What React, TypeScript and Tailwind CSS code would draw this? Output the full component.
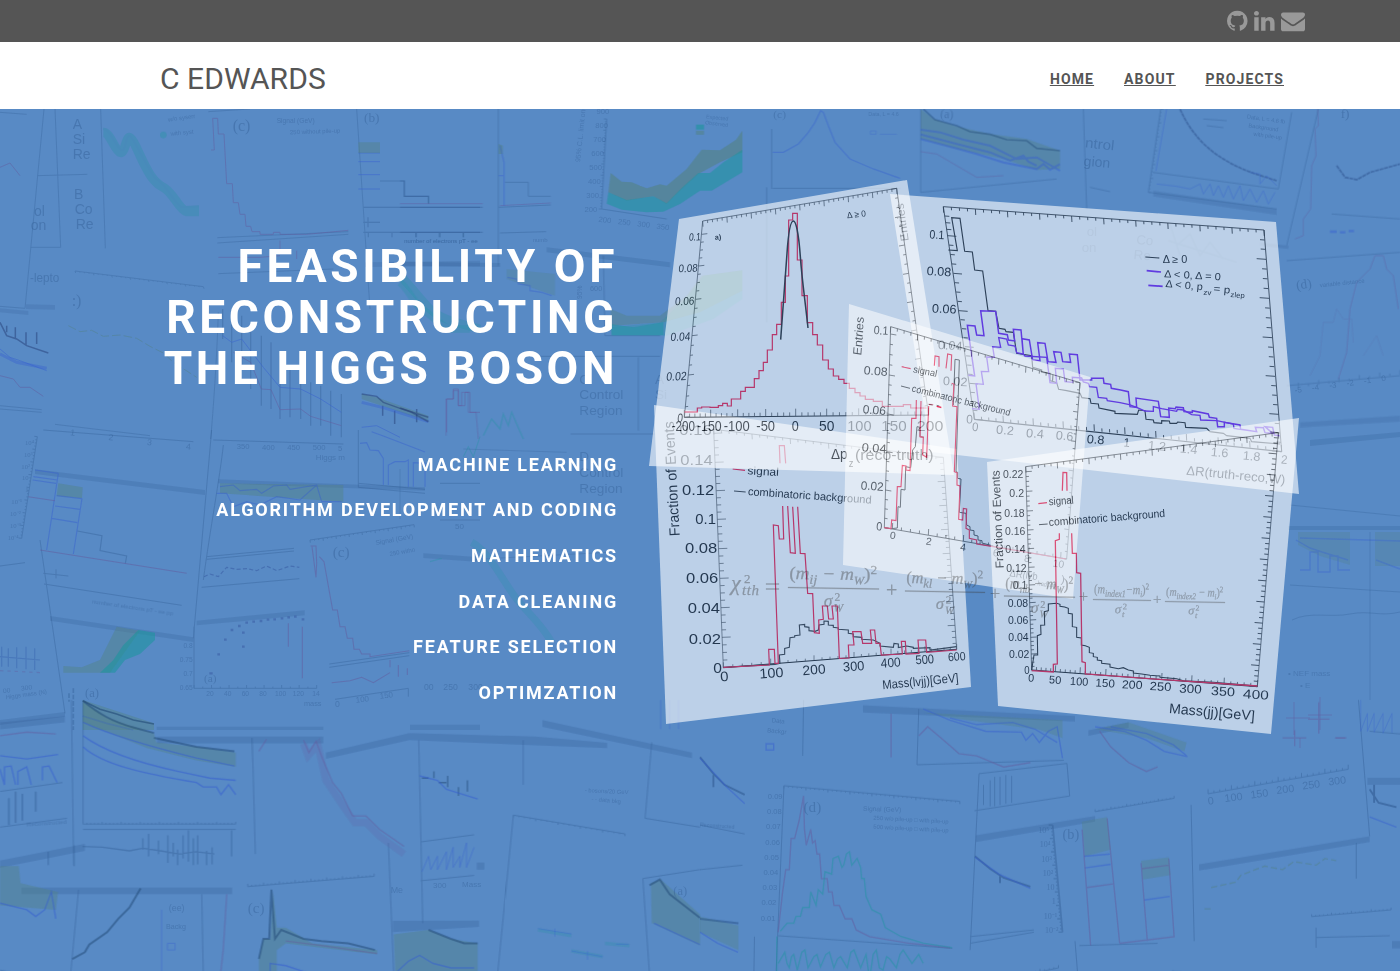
import React from "react";

type Pt = [number, number];

/* Places a group whose inner units are finer than a page pixel. */
function Zone({ x, y, k = 3, children }: { x: number; y: number; k?: number; children: React.ReactNode }) {
  return <g transform={`translate(${x} ${y}) scale(${1 / k})`}>{children}</g>;
}

/* Tick marks through a list of major points, with minor ones in between. */
function ticks(majors: Pt[], minor: number, dx: number, dy: number) {
  let d = "";
  majors.forEach(([x, y], i) => {
    d += `M${x} ${y}l${dx} ${dy}`;
    const next = majors[i + 1];
    if (!next) return;
    for (let j = 1; j < minor; j++) {
      const t = j / minor;
      d += `M${x + (next[0] - x) * t} ${y + (next[1] - y) * t}l${dx / 2} ${dy / 2}`;
    }
  });
  return d;
}

function even(a: Pt, b: Pt, n: number): Pt[] {
  return Array.from({ length: n + 1 }, (_, i) => [a[0] + ((b[0] - a[0]) * i) / n, a[1] + ((b[1] - a[1]) * i) / n] as Pt);
}

/* A histogram outline from the left edge and height of every bin. */
function steps(pts: Pt[]) {
  return pts.map(([x, y], i) => (i === 0 ? `M${x} ${y}` : `H${x}V${y}`)).join("");
}

type LabelProps = {
  x: number;
  y: number;
  s: number;
  w?: number;
  r?: number;
  k?: number;
  a?: "start" | "middle" | "end";
  fill?: string;
  serif?: boolean;
  children: string;
};

function Label({ x, y, s, w, r = 0, k = 0, a = "start", fill = "#000", serif = false, children }: LabelProps) {
  return (
    <text
      transform={`translate(${x} ${y}) rotate(${r}) skewX(${k})`}
      fontSize={s}
      textAnchor={a}
      fill={fill}
      textLength={w}
      lengthAdjust="spacingAndGlyphs"
      className={serif ? "font-['Liberation_Serif',serif]" : "font-['Liberation_Sans',sans-serif]"}
    >
      {children}
    </text>
  );
}

const RED = "#f5002f";
const PURPLE = "#6608f2";

function SheetMassLvjj() {
  const left: Pt[] = [[221, 100], [225, 187], [229, 272], [232, 358], [236, 446], [240, 535], [243, 623], [246, 712], [250, 803]];
  const bottom: Pt[] = [[250, 803], [392, 792], [522, 782], [642, 772], [753, 762], [855, 755], [950, 748]];
  const names = ["0.16", "0.14", "0.12", "0.1", "0.08", "0.06", "0.04", "0.02", "0"];
  const xs = [215, 218, 223, 228, 232, 235, 240, 243, 246];
  const ys = [106, 194, 284, 372, 460, 550, 640, 732, 818];
  return (
    <g opacity={0.6}>
      <polygon points="654,405 957,449 971,687 666,724" fill="#fff" />
      <Zone x={640} y={400}>
        <g fill="none" stroke="#333" strokeWidth={2}>
          <path d="M221 88L250 803M221 88L910 172L950 748" />
          <path d="M250 803L950 748" stroke="#000" strokeWidth={3} />
          <path d={ticks(left, 4, 26, -1)} />
          <path d={ticks(bottom, 5, 0, -16)} />
          <path d={ticks(even([221, 88], [910, 172], 6), 5, 1, 16)} />
          <path d={ticks(even([910, 172], [950, 748], 8), 4, -22, 1)} />
        </g>
        <path
          d="M250 802L405 793L420 790L418 765L434 763V745L448 742L450 713L464 711V707L480 705L478 675L494 673V680L507 682V692L525 694L535 690L537 675L552 673V663L565 664V675L580 676V682L595 684V688L625 690V700L640 702V710L665 712V718L700 720L720 730V738L760 742L762 730L775 732V743L800 738L820 742V745L870 743V750L905 746L950 740"
          fill="none"
          stroke="#222"
          strokeWidth={3.4}
        />
        <path
          d="M250 802L388 795L386 748L403 748L405 790L415 790L400 375L415 377L418 417L431 417L428 318M443 318L451 458L466 460L458 320M473 320L481 460L495 461L503 580L518 581L523 698L538 700L536 660L550 658L547 618L562 618L566 657L580 657L576 618L592 618L598 775L627 774L625 735L642 735L638 695L663 695L668 730L695 730L691 690L704 690L708 730L720 730L724 765L787 762L784 724L796 724L798 762L837 760L834 720L857 720L860 757L950 750M420 190L418 137L433 137L437 190M278 207L315 211"
          fill="none"
          stroke={RED}
          strokeWidth={3.6}
        />
        <path d="M282 273L317 276" stroke="#222" strokeWidth={3} />
        {names.map((n, i) => (
          <Label key={n} x={xs[i]} y={ys[i]} s={45} a="end" w={n === "0" ? 26 : n === "0.1" ? 62 : 97}>
            {n}
          </Label>
        ))}
        {["0", "100", "200", "300", "400", "500", "600"].map((n, i) => (
          <Label key={n} x={[254, 395, 523, 642, 753, 855, 951][i]} y={[844, 833, 823, 812, 801, 791, 782][i]} s={[42, 42, 41, 40, 39, 38, 36][i]} r={-4} a="middle" w={i === 0 ? 25 : [0, 72, 69, 64, 60, 56, 53][i]}>
            {n}
          </Label>
        ))}
        <Label x={728} y={868} s={38} r={-5.5} w={230}>Mass(lvjj)[GeV]</Label>
        <Label x={119} y={408} s={44} r={-93} w={345}>Fraction of Events</Label>
        <Label x={322} y={223} s={34} r={3} w={94}>signal</Label>
        <Label x={323} y={285} s={33} r={4} w={372}>combinatoric background</Label>
      </Zone>
    </g>
  );
}

function SheetDeltaR() {
  const left: Pt[] = [[203, 197], [220, 310], [237, 422], [255, 530], [268, 640], [283, 748]];
  const bottom: Pt[] = [[283, 748], [370, 757], [460, 765], [550, 774], [643, 783], [735, 792], [828, 803], [920, 812], [1015, 822], [1110, 833], [1205, 845]];
  const right: Pt[] = [[1158, 268], [1167, 385], [1176, 503], [1185, 619], [1196, 733], [1205, 845]];
  return (
    <g opacity={0.6}>
      <polygon points="890,194 1276,222 1299,494 931,452" fill="#fff" />
      <Zone x={880} y={170}>
        <g fill="none" stroke="#111" strokeWidth={2.6}>
          <path d="M283 748L190 110L1152 180L1205 845" />
          <path d="M283 748L1205 845" strokeWidth={3.4} />
          <path d={ticks(left, 4, 26, 2)} />
          <path d={ticks(bottom, 4, -1, -20)} />
          <path d={ticks(even([190, 110], [1152, 180], 10), 4, 1, 18)} />
          <path d={ticks(right, 4, -28, -2)} />
          <path d="M194 138l14 1M197 158l14 1M200 178l14 1M1154 210l-14 -1M1156 238l-14 -1" />
        </g>
        <path
          d="M205 240L232 242L215 143L240 145L254 244L277 246L284 300L308 303L324 422L347 424L357 475L375 478L378 485L400 487L410 550L455 557L458 592L485 600V607L510 610V632L530 638L536 658L560 662L600 670L606 683L630 686L633 700L655 702L657 714L705 724V730L772 733L776 720L795 722L798 748L820 750L822 758L845 760V752L868 753L870 760L890 760L893 756L915 758L917 772L980 775L990 785L1030 790L1040 797L1110 805L1115 815L1200 822"
          fill="none"
          stroke="#111"
          strokeWidth={3.4}
        />
        <path
          d="M265 616L284 618L262 466L285 468L290 495L312 497L302 422L347 424L356 490L382 494L385 510L404 513L400 478L423 480L430 555L426 506L448 510L458 570L480 572L473 518L495 520L504 575L528 577L521 545L543 547L548 575L572 577L568 552L592 554L600 630L635 630V625L670 625L672 640L692 643L694 655L722 660L745 665L750 710L770 712L768 684L835 694L842 740L868 742L866 714L886 716L888 711L910 713L912 725L937 727V722L985 732L988 742L1010 745L1013 770L1033 770V757L1080 765L1082 778L1130 785L1126 772L1150 773L1155 788L1178 790L1155 770L1178 772L1183 795L1200 797"
          fill="none"
          stroke={PURPLE}
          strokeWidth={4.4}
        />
        <path
          d="M276 716L298 718L288 641L310 643L304 604L326 605L320 561L343 562L338 530L362 532L356 503L380 507L385 525L405 528L410 548L430 552L435 558L500 562L510 638L530 640L526 595L550 597L555 635L578 637L577 622L605 624L610 636L625 640L628 650L650 652L655 682L680 685L682 692L720 698L748 704L770 712L795 723L820 724V710L845 716L890 724L892 718L910 720L935 734L960 736L962 750L1010 752L1060 762L1062 775L1080 778"
          fill="none"
          stroke={PURPLE}
          strokeWidth={4}
        />
        <path d="M796 261L838 264" stroke="#111" strokeWidth={3.4} />
        <path d="M800 302L843 306M805 346L848 349" stroke={PURPLE} strokeWidth={5} />
        <Label x={848} y={280} s={31} w={74}>Δ ≥ 0</Label>
        <Label x={852} y={322} s={31} r={3} w={170}>{"Δ < 0, Δ = 0"}</Label>
        <Label x={856} y={351} s={31} r={5} w={112}>{"Δ < 0, p"}</Label>
        <Label x={970} y={374} s={22} r={4} w={24}>zv</Label>
        <Label x={1000} y={366} s={31} r={5} w={50}>= p</Label>
        <Label x={1051} y={381} s={22} r={5} w={43}>zlep</Label>
        {["0.1", "0.08", "0.06", "0.04", "0.02", "0"].map((n, i) => (
          <Label key={n} x={[192, 213, 229, 247, 262, 278][i]} y={[208, 319, 431, 541, 649, 761][i]} s={37} r={3} a="end" w={i === 0 ? 44 : i === 5 ? 20 : 74}>
            {n}
          </Label>
        ))}
        {["0", "0.2", "0.4", "0.6", "0.8", "1", "1.2", "1.4", "1.6", "1.8", "2"].map((n, i) => (
          <Label key={n} x={[285, 374, 464, 553, 646, 739, 830, 925, 1018, 1114, 1212][i]} y={[783, 793, 803, 810, 821, 830, 840, 850, 860, 871, 881][i]} s={37} r={5} a="middle" w={n.length === 1 ? 19 : 53}>
            {n}
          </Label>
        ))}
        <Label x={918} y={914} s={39} r={5.5} w={298}>ΔR(truth-reco,W)</Label>
        <Label x={86} y={212} s={34} r={-98} w={114}>Entries</Label>
      </Zone>
    </g>
  );
}

const PEAK: Pt[] = [
  [133, 726], [172, 714], [185, 711], [210, 712], [235, 707], [248, 700], [262, 708], [274, 687], [302, 664], [316, 652],
  [343, 626], [357, 602], [370, 577], [382, 540], [397, 494], [410, 463], [424, 397], [436, 318], [446, 150], [458, 130],
  [472, 270], [486, 377], [502, 458], [518, 494], [532, 525], [548, 570], [565, 597], [580, 618], [596, 628], [612, 640],
  [628, 655], [645, 668], [660, 678], [676, 688], [700, 694], [727, 709], [790, 704], [812, 714], [860, 714],
];

function SheetDeltaPz() {
  const left: Pt[] = [[185, 193], [176, 288], [167, 388], [156, 497], [145, 615], [133, 742]];
  const bottom: Pt[] = [[133, 742], [212, 741], [293, 740], [377, 739], [467, 738], [560, 738], [656, 737], [762, 736], [866, 735]];
  return (
    <g opacity={0.6}>
      <polygon points="679,219 907,180 954,475 649,466" fill="#fff" />
      <Zone x={640} y={170}>
        <g fill="none" stroke="#333" strokeWidth={2.2}>
          <path d="M133 742L188 153L770 55L866 735" />
          <path d="M133 742L866 735" stroke="#111" strokeWidth={3} />
          <path d={ticks(left, 4, 17, -2)} />
          <path d={ticks(bottom, 5, 0, -22)} />
          <path d={ticks(even([188, 153], [770, 55], 8), 5, 1, 17)} />
          <path d={ticks(even([770, 55], [866, 735], 8), 3, -17, 3)} />
        </g>
        <path d={steps(PEAK)} fill="none" stroke={RED} strokeWidth={3.6} />
        <path d="M866 703l14 1M890 709l14 2" stroke={RED} strokeWidth={4} />
        <path d="M422 509C430 400 437 310 441 250S452 153 460 153S476 190 481 260S494 380 504 474" fill="none" stroke="#111" strokeWidth={4.5} />
        <Label x={622} y={145} s={26} r={-6} w={57}>Δ ≥ 0</Label>
        <g fontWeight={700}>
          <Label x={225} y={209} s={22} r={-3} w={19}>a)</Label>
        </g>
        {["0.1", "0.08", "0.06", "0.04", "0.02", "0"].map((n, i) => (
          <Label key={n} x={[181, 172, 162, 150, 139, 128][i]} y={[211, 305, 404, 511, 630, 756][i]} s={[32, 33, 34, 35, 36, 37][i]} k={-7} r={-2} a="end" w={[35, 57, 58, 59, 61, 17][i]}>
            {n}
          </Label>
        ))}
        {["-200", "-150", "-100", "-50", "0", "50", "100", "150", "200"].map((n, i) => (
          <Label key={n} x={[130, 208, 290, 377, 466, 560, 658, 762, 870][i]} y={783} s={44} a="middle" w={[70, 74, 78, 56, 21, 46, 73, 76, 80][i]}>
            {n}
          </Label>
        ))}
        <Label x={573} y={866} s={46} w={50}>Δp</Label>
        <Label x={626} y={891} s={30} w={14}>z</Label>
        <Label x={645} y={870} s={46} w={236}>(reco-truth)</Label>
      </Zone>
    </g>
  );
}

function SheetEntries() {
  const left: Pt[] = [[211, 102], [207, 225], [203, 342], [200, 455], [196, 570], [193, 683]];
  const bottom: Pt[] = [[217, 687], [325, 705], [430, 723], [530, 741], [627, 758], [722, 774]];
  return (
    <g opacity={0.54}>
      <polygon points="849,304 1090,377 1073,599 843,565" fill="#fff" />
      <Zone x={820} y={300}>
        <g fill="none" stroke="#111" strokeWidth={2.2}>
          <path d="M193 683L212 80L780 248L740 777Z" />
          <path d={ticks(left, 4, 18, 3)} />
          <path d={ticks(bottom, 4, 1, -18)} />
          <path d={ticks(even([212, 80], [780, 248], 7), 4, -1, 18)} />
          <path d={ticks(even([780, 248], [740, 777], 6), 4, -14, -2)} />
        </g>
        <path
          d="M193 683L213 686L232 684L234 620L241 622L243 568L255 570L257 500L272 503L278 450L286 440L291 380L300 382V410L312 412M400 315L405 178L418 180L408 515L413 517V535L423 537L418 637L438 640L440 675L450 680V690L462 692V705L474 708V720L486 722V729L520 738M350 316l8 2M326 313l12 2"
          fill="none"
          stroke="#333"
          strokeWidth={3}
        />
        <path
          d="M193 683L213 686L215 660L228 662L232 560L243 560L247 496L258 498V510L270 512L275 355L288 355L289 300M303 303L300 410L310 412L308 465L320 472L326 318M350 319l14 4M343 197L345 168L357 170V200M378 205L383 162L395 165L393 212M395 250L402 253L398 318L411 320L403 515L411 518V555L420 558L416 658L428 660L430 625L440 627L438 685L448 690V715L470 720V732L520 740L738 777M245 200L272 206"
          fill="none"
          stroke={RED}
          strokeWidth={3.4}
        />
        <path d="M243 258L270 265" stroke="#222" strokeWidth={3} />
        {["0.1", "0.08", "0.06", "0.04", "0.02", "0"].map((n, i) => (
          <Label key={n} x={[204, 202, 197, 199, 190, 186][i]} y={[105, 228, 345, 459, 573, 692][i]} s={36} r={4} a="end" w={i === 0 ? 44 : i === 5 ? 18 : [0, 72, 70, 75, 69][i]}>
            {n}
          </Label>
        ))}
        {["0", "2", "4", "6", "8", "10"].map((n, i) => (
          <Label key={n} x={[217, 325, 428, 526, 620, 714][i]} y={[717, 735, 752, 769, 786, 802][i]} s={31} r={8} a="middle">
            {n}
          </Label>
        ))}
        <Label x={568} y={829} s={32} r={8} w={84}>ΔR(lvb</Label>
        <Label x={652} y={856} s={20} r={8} w={56}>had,top</Label>
        <Label x={722} y={848} s={32} r={8}>)</Label>
        <Label x={124} y={167} s={36} r={-86} k={-4} w={115}>Entries</Label>
        <Label x={278} y={217} s={29} r={11} w={73}>signal</Label>
        <Label x={274} y={274} s={29} r={14} w={304}>combinatoric background</Label>
      </Zone>
    </g>
  );
}

function SheetMassJj() {
  const ys = [95, 154, 213, 270, 326, 382, 435, 488, 540, 592, 642, 692];
  const left = ys.map((y) => [197 + ((y - 78) / 614) * 18, y] as Pt);
  const bottom: Pt[] = [[215, 690], [286, 696], [360, 702], [437, 707], [520, 713], [605, 719], [695, 726], [792, 733], [892, 740]];
  return (
    <g opacity={0.6}>
      <polygon points="987,462 1299,418 1271,734 998,706" fill="#fff" />
      <Zone x={960} y={440}>
        <g fill="none" stroke="#222" strokeWidth={2.2}>
          <path d="M215 690L197 80L955 -22L892 740" />
          <path d="M215 690L892 740" stroke="#000" strokeWidth={3} />
          <path d={ticks(left, 4, 18, -1)} />
          <path d={ticks(bottom, 5, 1, -20)} />
          <path d={ticks(even([197, 80], [955, -22], 8), 5, 1, 18)} />
          <path d={ticks(even([955, -22], [892, 740], 12), 4, -24, -2)} strokeWidth={2.8} />
        </g>
        <path
          d="M215 690L222 645L233 645L232 587L243 583L242 556L254 555L253 515L265 512V492L290 490L300 493V499L314 501L325 505V520L337 522V560L350 562V592L364 594V615L376 617L388 622V638L400 640V650L412 652V660L425 662V670L450 673V681L475 686L490 683L505 690L520 693V699L545 702L570 706L600 708V712L650 716L670 722L700 724L760 727L892 738"
          fill="none"
          stroke="#111"
          strokeWidth={3.2}
        />
        <path
          d="M215 692L280 696V673L292 672L286 302L298 298V280M335 280L337 340L349 340L350 398L362 400L366 665L376 668V702L600 718L892 738M307 152L309 97L320 98L321 152M235 191L261 188"
          fill="none"
          stroke={RED}
          strokeWidth={3.8}
        />
        <path d="M237 254L263 252" stroke="#222" strokeWidth={3} />
        {["0.22", "0.2", "0.18", "0.16", "0.14", "0.12", "0.1", "0.08", "0.06", "0.04", "0.02", "0"].map((n, i) => (
          <Label key={n} x={[190, 192, 194, 196, 197, 200, 202, 204, 205, 206, 208, 209][i]} y={ys[i] + [20, 18, 17, 15, 14, 13, 12, 12, 12, 12, 11, 10][i]} s={35} a="end" w={n.length === 4 ? 61 : n.length === 3 ? 44 : 16}>
            {n}
          </Label>
        ))}
        {["0", "50", "100", "150", "200", "250", "300", "350", "400"].map((n, i) => (
          <Label key={n} x={[213, 285, 357, 435, 516, 601, 691, 788, 887][i]} y={[725, 731, 736, 741, 746, 752, 759, 767, 777][i]} s={[33, 33, 34, 34, 35, 36, 37, 38, 39][i]} r={3} a="middle" w={[18, 37, 55, 58, 62, 65, 68, 72, 77][i]}>
            {n}
          </Label>
        ))}
        <Label x={626} y={819} s={42} r={5} w={258}>Mass(jj)[GeV]</Label>
        <Label x={131} y={385} s={35} r={-92.5} w={295}>Fraction of Events</Label>
        <Label x={267} y={196} s={33} r={-4} w={75}>signal</Label>
        <Label x={267} y={258} s={33} r={-4.5} w={350}>combinatoric background</Label>
      </Zone>
    </g>
  );
}

type TermProps = { x: number; y: number; w: number; s: number; sub1: string; tail: string; sub2: string; den: string };

function Term({ x, y, w, s, sub1, tail, sub2, den }: TermProps) {
  return (
    <g>
      <text x={x + 1} y={y - s * 0.45} fontSize={s * 0.94} textLength={w - 3} lengthAdjust="spacingAndGlyphs">
        <tspan fontStyle="normal">(</tspan>m
        <tspan fontSize={s * 0.7} dy={s * 0.24}>{sub1}</tspan>
        <tspan dy={-s * 0.24}>{tail}</tspan>
        <tspan fontSize={s * 0.6} dy={s * 0.22}>{sub2}</tspan>
        <tspan fontStyle="normal" dy={-s * 0.22}>)</tspan>
        <tspan fontStyle="normal" fontSize={s * 0.65} dy={-s * 0.33}>2</tspan>
      </text>
      <rect x={x} y={y - 0.5} width={w} height={1} />
      <text x={x + w / 2 - s * 0.5} y={y + s * 0.95} fontSize={s * 0.92}>σ</text>
      <text x={x + w / 2 + s * 0.02} y={y + s * 1.22} fontSize={s * 0.6}>{den}</text>
      <text x={x + w / 2 + s * 0.06} y={y + s * 0.66} fontSize={s * 0.6} fontStyle="normal">2</text>
    </g>
  );
}

function Formula() {
  return (
    <g fill="#3d3d3d" opacity={0.4} fontStyle="italic" stroke="#3d3d3d" strokeWidth={0.25} className="font-['Liberation_Serif',serif]">
      <text x={731} y={590} fontSize={22}>χ</text>
      <text x={742} y={595} fontSize={15} textLength={17}>tth</text>
      <text x={744} y={583} fontSize={13} fontStyle="normal">2</text>
      <path d="M766 583.500H779V584.500H766ZM766 588.500H779V589.500H766Z" />
      <g transform="rotate(1 788 587.500)">
        <Term x={788} y={587.5} w={91} s={19} sub1="ij" tail=" − m" sub2="W" den="W" />
      </g>
      <text x={886} y={597} fontSize={20} fontStyle="normal">+</text>
      <g transform="rotate(1 905 591)">
        <Term x={905} y={591} w={80} s={18} sub1="kl" tail=" − m" sub2="W" den="W" />
      </g>
      <text x={990} y={600} fontSize={18} fontStyle="normal">+</text>
      <g transform="rotate(1 1004 596)">
        <Term x={1004} y={596} w={71} s={17} sub1="nb" tail=" − m" sub2="W" den="W" />
      </g>
      <text x={1079} y={602} fontSize={16} fontStyle="normal">+</text>
      <g opacity={0.9}>
        <g transform="rotate(1 1093 599.500)">
          <Term x={1093} y={599.5} w={58} s={14} sub1="index1" tail="−m" sub2="i" den="t" />
        </g>
        <text x={1153} y={604} fontSize={15} fontStyle="normal">+</text>
        <g transform="rotate(1 1165 601.500)">
          <Term x={1165} y={601.5} w={60} s={13} sub1="index2" tail=" − m" sub2="i" den="t" />
        </g>
      </g>
    </g>
  );
}

const INK = "#163d70";
const BLUE = "#2447d8";
const PLUM = "#6d3f86";
const TEAL = "#079a90";
const OLIVE = "#527f61";

function CollageTopLeft() {
  return (
    <Zone x={0} y={109}>
      <g fill="none" stroke={INK} strokeWidth={2.5} opacity={0.3}>
        <path d="M132 0L75 598L0 592M165 0L182 415H92M112 200L262 196M302 0L316 418M1070 0L1110 600M0 10L80 16M625 8L750 0" />
        <path d={ticks(even([225, 486], [610, 533], 7), 4, 2, 6)} />
        <path d="M225 486L610 533M652 386L1045 368M652 402L1045 376M655 494L1000 480M165 946L450 980M0 890L125 902M0 900L125 910M655 610C650 760 640 900 632 990" />
        <path d="M1140 216H1212V262H1286V284M1090 295H1440M1090 370H1440M1104 325V355M1090 340H1140M1105 370v15M1176 370v15M1248 370v15M1320 370v15M1390 370v15" strokeWidth={3.4} />
        <path d="M668 600V690M695 610V760M725 620V780M752 640V840M784 680V890M813 700V900M840 740V930M870 770V925M902 800V930M932 820V950M962 830V950M992 845V980M1024 855V985" strokeWidth={3.6} />
      </g>
      <g fill={INK} opacity={0.16}>
        <path d="M0 598L85 606V618L0 610ZM78 586L165 588V602L78 600ZM1095 460L1440 455V472L1095 474Z" />
      </g>
      <g fill="none" opacity={0.26} strokeLinejoin="round">
        <path d="M310 70C330 70 345 125 360 130S378 85 388 85S415 130 430 160S460 220 490 235S535 300 560 308H597" stroke={TEAL} strokeWidth={28} />
        <path d="M310 60C330 60 345 110 362 122S376 78 388 80S420 140 465 208C500 225 520 280 545 295L597 292" stroke="#048a8a" strokeWidth={6} />
        <path d="M1200 500C1240 540 1260 570 1290 600S1370 640 1440 660" stroke={TEAL} strokeWidth={26} />
      </g>
      <g fill="none" opacity={0.42} strokeWidth={3}>
        <path d="M633 123H643L638 28H653L655 75H672L680 224H697L700 281H715L720 316H735L738 352H752L756 368H780V376H820V370H840V376H920L1045 364" stroke={PLUM} />
        <path d="M0 175L30 162L60 200M0 800L40 810L60 835H90L130 862M1340 970V870H1360V840H1375V890H1395V850H1410V910H1440M655 445H780L840 440M840 395V430M890 425V450" stroke={PLUM} />
        <path d="M668 680L695 700L725 690L790 775L840 835L902 840L962 870L1024 910M1075 132H1140M1075 158H1140M1075 197H1140M1075 240H1140M0 720L30 745L60 755L100 770L140 785M1085 955L1130 950L1200 985" stroke={BLUE} />
        <path d="M700 730L752 760L784 840L813 842L840 902L902 900L932 922L1024 950" stroke={PLUM} />
        <path d="M205 650L240 668L275 664L310 682L360 678L410 688L450 712L490 732L520 760L590 805" stroke={OLIVE} strokeDasharray="26 9" />
      </g>
      <path d="M1075 100H1140V132H1075ZM1085 855L1130 865L1285 920V938L1130 885L1085 870Z" fill={OLIVE} opacity={0.4} />
      <path d="M0 640L20 680L50 690L80 710L145 732M20 650V670M46 655V690M78 670V710M110 670V705M1085 855L1130 862L1150 880L1200 898L1285 925M1148 890v30M1184 905v40M1250 900v40" fill="none" stroke="#101d55" strokeWidth={4.5} opacity={0.5} />
      <path d="M0 735L50 760L140 778M1085 880L1150 896L1285 938" fill="none" stroke={BLUE} strokeWidth={9} opacity={0.36} />
      <g opacity={0.34}>
        <Label x={218} y={60} s={42} fill={INK}>A</Label>
        <Label x={218} y={105} s={42} fill={INK}>Si</Label>
        <Label x={218} y={149} s={42} fill={INK}>Re</Label>
        <Label x={222} y={270} s={42} fill={INK}>B</Label>
        <Label x={224} y={316} s={42} fill={INK}>Co</Label>
        <Label x={227} y={360} s={42} fill={INK}>Re</Label>
        <Label x={102} y={320} s={42} fill={INK}>ol</Label>
        <Label x={92} y={362} s={42} fill={INK}>on</Label>
        <Label x={90} y={520} s={40} fill={INK} w={88}>-lepto</Label>
        <Label x={698} y={66} s={48} fill={INK} serif>(c)</Label>
        <Label x={1092} y={38} s={40} fill={INK} serif>(b)</Label>
        <Label x={215} y={590} s={48} fill={INK} serif>:)</Label>
        <Label x={830} y={42} s={20} fill={INK}>Signal (GeV)</Label>
        <Label x={870} y={76} s={18} fill={INK} r={-2}>250 without pile-up</Label>
        <Label x={505} y={38} s={18} fill={INK} r={-8}>w/o syserr</Label>
        <Label x={512} y={80} s={18} fill={INK} r={-5}>with syst</Label>
        <Label x={1213} y={402} s={18} fill={INK}>number of electrons pT - ee</Label>
      </g>
      <circle cx={490} cy={78} r={10} fill={TEAL} opacity={0.36} />
    </Zone>
  );
}

function CollageMidLeft() {
  return (
    <Zone x={0} y={430}>
      <g fill="none" stroke={INK} strokeWidth={2.8} opacity={0.32}>
        <path d="M112 20L65 325M635 0L580 625M130 0L580 35M640 30L1030 42M670 45C660 140 630 300 610 450M1075 0V172L1275 190M1075 160L1275 178M620 380L882 355M620 388L882 363M605 472L898 446M582 590V775H950M930 330L1242 284M988 702L1228 668M988 712L1228 677M1005 808L1225 775V800M132 462L545 526M130 430L205 438M168 418V445M0 408L75 398M120 330L195 850M1320 160H1440M1320 270H1440" />
        <path d="M232 303L306 317L300 362L380 378L376 400" strokeWidth={3.4} />
        <path d={ticks(even([930, 330], [1242, 284], 8), 3, 1, 8)} />
        <path d={ticks(even([582, 775], [950, 775], 7), 2, 0, -10)} />
        <path d={ticks(even([112, 20], [65, 325], 8), 4, -9, -1)} />
      </g>
      <g fill={INK} opacity={0.19}>
        <path d="M105 118L615 180V195L105 132ZM150 558L580 622V636L150 572ZM655 148L1275 172V182L655 160ZM590 572L914 541V556L590 586ZM0 870L195 846V860L0 885ZM470 890H970V900H470ZM1270 370L1440 382V396L1270 384ZM1230 884H1440V900H1230Z" />
      </g>
      <path d="M175 160L248 172L246 205L170 198ZM350 590L420 602L330 728H190V708L245 712L300 690ZM660 160L1030 165V215L660 190ZM248 810L462 880V900H248Z" fill={OLIVE} opacity={0.42} />
      <path d="M415 600L465 608V630L420 672L375 690L345 728H300L340 690L370 645Z" fill={TEAL} opacity={0.6} />
      <g fill="none" stroke={BLUE} strokeWidth={3.4} opacity={0.4}>
        <path d="M105 120L175 130M100 140L172 150M98 150L168 160M170 197L245 206M165 228L240 238M155 265L232 278M175 130L140 360M246 205L220 372M650 190H680L700 230L740 215L780 225L830 200L900 210L950 165L965 215H1025M660 170L700 165L720 182L770 178L785 190L820 168L860 165L870 178L950 165M1080 40L1100 38L1110 60L1135 62L1150 85V165M1165 165V105L1185 95H1215L1225 90V170M1240 170V98L1275 100V170M1115 5L1150 18L1275 66" />
        <path d="M248 858L320 880L400 900" strokeWidth={5} />
      </g>
      <g fill="none" stroke={PLUM} strokeWidth={3.2} opacity={0.45}>
        <path d="M932 348H948L950 400L948 442L936 350M958 380L972 395L998 540H1012L1020 590H1035L1042 625H1058L1062 658H1078L1085 672H1110V680L1228 662M85 200L165 212M120 360L560 430M995 758L1050 752L1085 742L1120 758L1170 728M1170 690V712M1195 705V740M1222 715V735M865 580V650M907 590V745" />
      </g>
      <g fill="none" stroke="#15267c" strokeWidth={7} opacity={0.36}>
        <path d="M628 730l10 0M652 673h8M672 629h8M692 600h8M714 588h8M736 578h8M757 575h8M779 573h8M800 569h8M820 568h8M842 565h8M862 562h8M882 560h8M905 568h8M726 650h8M726 608h8" />
        <path d="M612 440L630 432L655 440L680 412L710 418L740 416L770 422L800 408L830 422L870 408L898 412" strokeWidth={3.5} strokeDasharray="12 7" />
      </g>
      <path d="M248 812L300 838L350 852L400 870L462 882" fill="none" stroke="#0c2f56" strokeWidth={5} opacity={0.6} />
      <g fill="none" opacity={0.32} strokeWidth={3.4}>
        <path d="M0 680L120 690M5 650V710M25 655V710M50 652V715M78 650V718M104 655V720" stroke="#1a3f9a" />
        <path d="M0 722L125 728" stroke={PLUM} strokeDasharray="10 12" />
        <path d="M220 775V900M207 790V815" stroke={INK} strokeWidth={5} strokeDasharray="14 5" />
        <path d="M1390 80L1405 50L1420 80L1440 20M1290 395L1325 385" stroke={TEAL} />
      </g>
      <g opacity={0.34}>
        {["1", "2", "3", "4"].map((n, i) => (
          <Label key={n} x={[210, 325, 440, 557][i]} y={[16, 30, 45, 58][i]} s={26} r={6} fill={INK}>{n}</Label>
        ))}
        {["10⁴", "10³", "10²", "10", "1", "10⁻¹", "10⁻²", "10⁻³", "10⁻⁴"].map((n, i) => (
          <Label key={n} x={[102, 98, 90, 86, 86, 66, 62, 62, 56][i]} y={45 + i * 35.5} s={20} a="end" fill={INK} serif>{n}</Label>
        ))}
        {["350", "400", "450", "500", "5"].map((n, i) => (
          <Label key={i} x={710 + i * 76} y={58 + i} s={23} fill={INK}>{n}</Label>
        ))}
        <Label x={947} y={90} s={24} fill={INK}>Higgs m</Label>
        <Label x={998} y={380} s={46} fill={INK} serif>(c)</Label>
        <Label x={1128} y={345} s={20} fill={INK} r={-10}>Signal (GeV)</Label>
        <Label x={1170} y={378} s={18} fill={INK} r={-10}>250 witho</Label>
        <Label x={276} y={520} s={18} fill={INK} r={8.5}>number of electrons pT - ee pp</Label>
        {["0.8", "0.75", "0.7", "0.65"].map((n, i) => (
          <Label key={n} x={578} y={655 + i * 42} s={20} a="end" fill={INK}>{n}</Label>
        ))}
        {["20", "40", "60", "80", "100", "120", "14"].map((n, i) => (
          <Label key={n} x={630 + i * 53} y={797} s={20} a="middle" fill={INK}>{n}</Label>
        ))}
        <Label x={612} y={756} s={34} fill={INK} serif>(a)</Label>
        <Label x={255} y={802} s={38} fill={INK} serif>(a)</Label>
        <Label x={912} y={827} s={22} fill={INK}>mass</Label>
        <Label x={1005} y={830} s={26} fill={INK}>0</Label>
        <Label x={1068} y={818} s={24} fill={INK} r={-6}>100</Label>
        <Label x={1140} y={806} s={24} fill={INK} r={-6}>150</Label>
        <Label x={1272} y={779} s={26} fill={INK}>00</Label>
        <Label x={1330} y={779} s={26} fill={INK}>250</Label>
        <Label x={1405} y={779} s={26} fill={INK}>300</Label>
        <Label x={10} y={790} s={20} fill={INK} r={-8}>00</Label>
        <Label x={64} y={782} s={20} fill={INK} r={-8}>300</Label>
        <Label x={18} y={808} s={18} fill={INK} r={-8}>Higgs mass (N)</Label>
        <Label x={1365} y={298} s={24} fill={INK}>50</Label>
      </g>
    </Zone>
  );
}

function CollageTopMid() {
  return (
    <Zone x={400} y={109}>
      <g fill="none" stroke={INK} strokeWidth={2.8} opacity={0.32}>
        <path d="M295 0V470M315 220H385V262H452M295 295L452 288M300 372L438 368M620 30L605 300L800 330M1115 60V240M1118 238H1500M610 440L615 680H780M715 745V965M420 742H780M512 975H765M1100 235V640" />
        <path d="M0 216H14V262H85V284M0 295H248M0 370H248M48 370v15M118 370v15M190 370v15" strokeWidth={3.4} />
        <path d={ticks(even([620, 30], [605, 300], 8), 4, -8, 0)} />
      </g>
      <path d="M0 458L300 462V474L0 470ZM440 415L810 460V475L440 430Z" fill={INK} opacity={0.2} />
      <path d="M632 192L665 218L695 220L740 238L780 226L800 230L860 180L905 122L960 124L1008 92L1027 65V130L960 160L895 195L845 240L800 285L760 262L680 275L625 250Z" fill={OLIVE} opacity={0.56} />
      <path d="M625 250L680 273L760 262L800 283L845 237L895 192H930L970 160L1027 122V190L935 245H900L840 285L790 308L740 310L665 302L620 284Z" fill={TEAL} opacity={0.58} />
      <path d="M780 640L860 565L910 500L1027 484V570L940 630L800 680H635V655Z" fill={TEAL} opacity={0.28} />
      <path d="M632 600L680 620H780L860 560L905 500L1027 484V545L900 610L790 640L632 650Z" fill={OLIVE} opacity={0.4} />
      <path d="M320 480L465 495V560L320 510Z" fill={OLIVE} opacity={0.25} />
      <path d="M632 645L700 655L790 640V678H635Z" fill={TEAL} opacity={0.5} />
      <path d="M888 47H912V62H888Z" fill={TEAL} opacity={0.65} />
      <path d="M888 65H912V77H888ZM296 105L308 110V135H296Z" fill={OLIVE} opacity={0.5} />
      <path d="M0 520C30 545 45 590 65 600S120 650 150 660H210" fill="none" stroke={TEAL} strokeWidth={22} opacity={0.26} />
      <path d="M0 284H248M300 290L452 282M138 980V870H160V845H175V890H185V850H205V910H228L235 990" fill="none" stroke={PLUM} strokeWidth={3} opacity={0.38} />
      <path d="M250 980L275 930L300 960L310 915L325 950L335 910L350 945L370 990" fill="none" stroke={TEAL} strokeWidth={4} opacity={0.35} />
      <g fill="none" stroke={BLUE} strokeWidth={3} opacity={0.35}>
        <path d="M296 200H312V290M300 110L312 160V200H296M322 505L350 510L355 525L390 530V545L425 550L455 560M1118 130H1150L1195 105L1225 70L1245 40L1262 5L1270 10L1285 50L1305 100L1350 150L1420 180L1500 208" strokeWidth={4} />
        <path d="M1411 66H1428V76H1411ZM1440 76H1490" strokeWidth={2} />
      </g>
      <path d="M0 897L35 910L85 938" stroke="#101d55" strokeWidth={5} fill="none" opacity={0.5} />
      <g opacity={0.32}>
        {["900", "800", "700", "600", "500", "400", "300", "200"].map((n, i) => (
          <Label key={n} x={[628, 624, 618, 612, 606, 602, 597, 592][i]} y={14 + i * 42} s={23} a="end" fill={INK}>{n}</Label>
        ))}
        {["200", "250", "300", "350"].map((n, i) => (
          <Label key={n} x={595 + i * 58} y={338 + i * 7} s={23} r={7} fill={INK}>{n}</Label>
        ))}
        <Label x={540} y={160} s={21} r={-84} fill={INK}>95% C.L. limit on</Label>
        <Label x={545} y={570} s={20} r={-90} fill={INK}>95%</Label>
        <Label x={570} y={547} s={22} fill={INK}>600</Label>
        <Label x={1120} y={26} s={34} fill={INK} serif>(c)</Label>
        <Label x={538} y={825} s={41} fill={INK}>C</Label>
        <Label x={538} y={871} s={41} fill={INK}>Control</Label>
        <Label x={538} y={918} s={41} fill={INK}>Region</Label>
        <Label x={765} y={825} s={41} fill={INK}>A</Label>
        <Label x={765} y={871} s={41} fill={INK}>Si</Label>
        <Label x={12} y={402} s={18} fill={INK}>number of electrons pT - ee</Label>
        <Label x={538} y={1057} s={41} fill={INK}>D</Label>
        <Label x={538} y={1104} s={41} fill={INK}>Control</Label>
        <Label x={538} y={1151} s={41} fill={INK}>Region</Label>
        <Label x={398} y={398} s={18} fill={INK}>numb</Label>
        <Label x={918} y={28} s={16} fill={INK} r={6}>Expected</Label>
        <Label x={915} y={46} s={16} fill={INK} r={6}>Observed</Label>
        <Label x={1405} y={20} s={16} fill={INK}>Data, L = 4.6</Label>
      </g>
      <g fill="none" opacity={0.2}>
        <path d="M215 1300C270 1330 310 1420 350 1470S420 1540 455 1600" stroke={TEAL} strokeWidth={22} />
        <path d="M0 1080V1230M190 1020L500 1030M245 1350L620 1330" stroke={INK} strokeWidth={3} />
      </g>
    </Zone>
  );
}

function CollageTopRight() {
  return (
    <Zone x={890} y={109}>
      <path d="M92 0L130 30L200 52L300 75L410 90L510 125V180L440 183L340 150L200 120L92 90Z" fill={OLIVE} opacity={0.38} />
      <g fill="none" stroke={INK} strokeWidth={2.8} opacity={0.3}>
        <path d="M92 0V250L500 210M580 0L590 300M812 0L775 250L1160 300M788 190L1165 240M1205 10L1165 240M1285 0L1190 410M1325 315L1530 330M1190 455L1530 430M1190 830L1530 800" />
        <path d={ticks(even([812, 0], [775, 250], 6), 4, 8, 0)} />
        <path d={ticks(even([1225, 835], [1530, 797], 5), 2, 0, -14)} />
        <path d="M940 30L1010 35M950 50L1000 56M600 235L660 248" />
      </g>
      <path d="M790 245L1160 300V318L790 262ZM1110 400L1195 410V420L1110 410ZM1230 940L1530 920V938L1230 955Z" fill={INK} opacity={0.17} />
      <path d="M100 0L135 32L200 50L240 68L300 76L350 92L410 95L440 118L510 125" fill="none" stroke="#123760" strokeWidth={5} opacity={0.5} />
      <path d="M870 0C900 70 950 120 1000 150S1080 190 1160 215M1340 170L1365 205L1400 212L1440 190L1530 165" fill="none" stroke="#102a66" strokeWidth={5} strokeDasharray="12 2" opacity={0.46} />
      <g fill="none" stroke={BLUE} opacity={0.42}>
        <path d="M92 62L150 70L220 92L300 110L380 150L440 145L510 185M92 90L200 118L260 135L340 160L440 180L460 165L480 182L510 165M92 76L200 105L300 130L360 155L400 140L415 158L440 170" strokeWidth={6} />
        <path d="M830 0L798 185M800 225L860 232L900 240L930 225L940 255L960 225L970 260L985 230L1000 265L1015 230L1030 270L1050 230L1060 275L1080 240L1100 280L1120 245L1135 285L1155 250M1080 190L1110 195V225L1130 200L1160 230" strokeWidth={2.2} />
        <path d="M1320 368h20M1350 370h16M1376 366h16" strokeWidth={7} />
      </g>
      <g fill="none" stroke={PLUM} strokeWidth={3} opacity={0.34}>
        <path d="M92 128L140 135L200 170L260 205L340 200M1283 0L1285 50L1275 60L1278 140L1265 170L1262 300L1240 330V380L1215 390M1345 810L1370 730L1380 600L1400 520L1440 480L1455 440H1480L1490 480L1510 500L1525 600" />
        <path d="M1260 800L1290 740L1300 640H1330L1340 600L1360 630H1385L1390 700M1420 740L1460 680L1480 740" strokeWidth={2} opacity={0.6} />
      </g>
      <g opacity={0.36}>
        <Label x={584} y={115} s={42} r={6} w={88} fill={INK}>ntrol</Label>
        <Label x={580} y={170} s={42} r={5} w={80} fill={INK}>gion</Label>
        <Label x={1352} y={28} s={40} fill={INK} serif>f)</Label>
        <Label x={150} y={26} s={36} r={4} fill={INK} serif>(a)</Label>
        <Label x={1220} y={542} s={40} r={-8} fill={INK} serif>(d)</Label>
        <Label x={1290} y={535} s={18} r={-6} fill={INK}>variable distance</Label>
        <Label x={738} y={405} s={40} r={5} fill={INK}>Co</Label>
        <Label x={730} y={450} s={40} r={5} fill={INK}>Re</Label>
        <Label x={590} y={380} s={40} fill={INK}>ol</Label>
        <Label x={575} y={430} s={40} fill={INK}>on</Label>
        {["-5", "-4", "-3", "-2", "-1", "0"].map((n, i) => (
          <Label key={n} x={1215 + i * 52} y={852 - i * 7} s={24} r={-8} fill={INK}>{n}</Label>
        ))}
        <Label x={1070} y={28} s={17} r={8} fill={INK}>Data, L = 4.6 fb</Label>
        <Label x={1075} y={55} s={17} r={8} fill={INK}>Background</Label>
        <Label x={1090} y={80} s={17} r={8} fill={INK}>with pile-up</Label>
      </g>
      <path d="M840 345L870 440M835 395L1040 460M860 410L900 375L930 440L960 400L1000 450" fill="none" stroke={INK} strokeWidth={4} opacity={0.13} />
    </Zone>
  );
}

function CollageRight() {
  return (
    <g>
      <path d="M1288 526H1400V530H1288ZM1310 440L1400 432V437L1310 446Z" fill={INK} opacity={0.2} />
      <path d="M1298 532H1350V565L1320 556L1298 545ZM1375 532H1400V566H1375Z" fill={OLIVE} opacity={0.22} />
      <g fill="none" stroke={BLUE} strokeWidth={1.4} opacity={0.32}>
        <path d="M1296 540L1310 548L1322 552L1348 560M1300 570H1310V552H1318V572H1330V556H1338V570H1350M1376 560L1400 569M1300 538L1400 541" />
      </g>
      <g fill="none" stroke={INK} opacity={0.24}>
        <path d="M1290 505L1400 516M1292 620C1310 611 1330 618 1350 614S1380 617 1400 612M1370 532V700M1290 585L1400 592" />
      </g>
      <path d="M1286 718H1310M1294 702V735M1320 697V730M1300 738V748M1308 715H1332M1336 738H1345" fill="none" stroke={PLUM} opacity={0.36} />
      <g opacity={0.3}>
        <Label x={1288} y={676} s={8} fill={INK}>• NEF mass</Label>
        <Label x={1300} y={688} s={8} fill={INK}>• E</Label>
      </g>
    </g>
  );
}

function CollageBottomLeft() {
  return (
    <Zone x={0} y={700} k={2.24}>
      <path d="M352 82H724V97H352ZM730 118L917 74L1200 82L1360 96V108L917 90L730 132ZM1215 45L1550 118V130L1215 60ZM0 360L190 322V338L0 376ZM48 420H520V435H48ZM880 495L1073 494V508L880 520ZM0 50L145 36V50L0 66ZM0 800H46V813H0ZM1068 364H1085V380H1068Z" fill={INK} opacity={0.22} />
      <path d="M186 5L240 40L345 75L350 95L440 105L528 118V150L440 135L330 108L186 50ZM0 372H42L46 410L130 430L125 470L0 460ZM580 580L590 535H606L612 430L620 510H640L700 545L845 560V570L640 545L620 560V660L580 665ZM882 525L960 515L1010 535L1070 545V620H886ZM1458 410L1480 402L1568 480V550L1460 500Z" fill={OLIVE} opacity={0.38} />
      <g fill="none" stroke={INK} strokeWidth={2.2} opacity={0.34}>
        <path d="M186 5V275M186 290H528M186 278H528M160 0L165 370M565 85L572 345M938 90L947 500M870 320L890 810M555 418L838 395M570 755L855 742M572 764L855 750M176 425L145 755M178 665V755M178 720L420 712M452 435L458 755M1150 258L1400 300M1150 258L1115 610M1122 710L1425 737M1440 400L1465 760M1440 400L1568 380M0 605L122 628M0 610L122 634M0 205L140 185M0 285L150 265M1172 90V190M1460 95L1445 265L1568 285M942 318L1062 302M942 405L1062 393M890 755L1050 745M0 700L110 718M1465 665H1568" />
        <path d={ticks(even([555, 418], [838, 395], 8), 4, 0, -6)} />
        <path d={ticks(even([1150, 258], [1400, 300], 5), 4, 0, 5)} />
        <path d={ticks(even([186, 278], [528, 278], 8), 5, 0, -5)} />
        <path d="M20 220V280M35 205V275M50 210V270M80 205V250M668 765V810M700 755V813M715 760V813M735 755V813M752 765V813M775 755V813M800 755V813" strokeWidth={4} />
        <path d="M185 328L230 330L290 338L320 332L360 338L400 345L440 340L480 345M320 310V335M333 300V350M355 315V345M376 303V365M388 320V350M398 335V370M410 303V355M422 292V362M433 310V370M443 303V368M463 338V370M475 330V368M519 292V350M108 340V370M166 325V372" strokeWidth={3} />
        <path d="M0 655L20 665L40 660L65 668L80 675L110 665" strokeWidth={4} strokeDasharray="9 5" />
      </g>
      <g fill="none" stroke="#0d3157" strokeWidth={4.4} opacity={0.55}>
        <path d="M186 2C220 30 250 48 300 62L345 74M345 85L440 105L525 115M162 580L190 565L200 548L240 520L265 490L290 465L315 422M580 580L590 535H603L608 425L616 535L630 515L680 535L720 540L780 545L840 560M960 515L1010 535L1040 545H1070M1455 415L1478 402L1500 435L1568 488M1208 802L1225 795L1228 765L1250 755L1254 795L1264 800" />
        <path d="M945 175H960M972 160V175M983 185H1000M1003 170V195M1027 195V215M1047 180V205" strokeWidth={3} />
      </g>
      <g fill="none" stroke={BLUE} strokeWidth={3} opacity={0.5}>
        <path d="M186 50C250 80 350 108 440 130L525 148M186 80C240 120 330 145 400 160L470 175L528 180M186 105C230 145 320 165 440 185L455 195L485 195L495 212L512 190L528 212M940 170L980 180L1000 200L1070 222M0 155L10 190V150L25 148L35 190M40 190V160L60 150L70 190M95 180V150L110 148L128 185M0 125L60 132L130 122M0 455L60 470L80 485L100 470L115 430L125 490M575 755V670L605 650V590L640 595L700 615L750 640L770 625L800 640L845 645V740M620 640L635 655L650 645L665 660L690 670L695 740H700V690L715 675H740L748 670V745M758 670V745M775 745V670L800 680V745M815 745V670L835 690V740M886 620H1065M888 610L915 585L940 572L970 590L1010 600H1062M1465 500L1568 548" />
        <path d="M945 385L960 350L965 380L980 350V380L1000 340V380L1015 330V375L1030 350V375L1045 320V375L1062 330M362 470V705M375 545H392V560H375Z" strokeWidth={1.6} />
        <path d="M1480 0V65M1500 0V65M1520 0V65" strokeWidth={1.4} />
      </g>
      <g fill="none" stroke={PLUM} strokeWidth={3} opacity={0.4}>
        <path d="M580 115L597 88M680 90L692 118L708 92L722 130L745 185L765 210L790 260H820L850 290L905 328M508 435L500 560L490 650L480 755M888 665L920 635L945 628L970 650L1000 670L1030 705H1052M0 80L60 72L125 76M640 540L720 550L845 568" />
      </g>
      <path d="M680 98L690 125L712 100L730 180L770 240L795 275H820L850 305L905 345" fill="none" stroke={PLUM} strokeWidth={16} opacity={0.16} />
      <path d="M1205 515L1280 528M1280 562L1350 575M1355 545L1410 550" stroke={TEAL} strokeWidth={8} opacity={0.22} />
      <path d="M1205 512L1280 524M1243 512v18M1280 562L1350 575M1316 562v20M1380 547h28" stroke={BLUE} strokeWidth={2} opacity={0.35} fill="none" />
      <g opacity={0.34}>
        <Label x={555} y={478} s={34} fill={INK} serif>(c)</Label>
        <Label x={1155} y={645} s={34} fill={INK} serif>(d)</Label>
        <Label x={1120} y={770} s={34} fill={INK} serif>c)</Label>
        <Label x={1508} y={436} s={28} fill={INK} serif>(a)</Label>
        <Label x={378} y={472} s={20} fill={INK}>(ee)</Label>
        <Label x={372} y={512} s={16} fill={INK}>Backg</Label>
        <Label x={875} y={432} s={20} fill={INK}>Me</Label>
        <Label x={66} y={750} s={16} fill={INK}>Events</Label>
        <Label x={60} y={284} s={14} r={-4} fill={INK}>Reconstructed</Label>
        <Label x={1310} y={206} s={13} r={3} fill={INK}>- bosons/20 GeV</Label>
        <Label x={1325} y={226} s={13} r={5} fill={INK}>- - data bkg</Label>
        <Label x={970} y={420} s={18} fill={INK}>300</Label>
        <Label x={1035} y={418} s={18} fill={INK}>Mass</Label>
        <Label x={1390} y={785} s={18} fill={INK}>Data</Label>
      </g>
    </Zone>
  );
}

function CollageBottomRight() {
  return (
    <Zone x={700} y={700} k={2.24}>
      <path d="M365 12L840 36V48L365 28ZM618 303L885 260V272L618 318ZM1118 368L1500 305V318L1118 382ZM85 706L437 734V747L85 720ZM1495 174H1568V190H1495ZM1550 540H1568V556H1550ZM870 68L960 50L960 62L870 80Z" fill={INK} opacity={0.22} />
      <path d="M500 28L812 45V85L760 66L560 40ZM885 65L960 50L1090 95L1085 115L1000 85ZM855 272L912 262L920 335L862 350ZM988 360L1050 352L1054 392L992 402ZM1045 752L1130 745L1160 720L1212 715L1250 765L1310 800V813H1045ZM0 485L86 505V560L0 520Z" fill={OLIVE} opacity={0.32} />
      <g fill="none" stroke={INK} strokeWidth={2.2} opacity={0.34}>
        <path d="M188 192L582 227M188 192L170 620M175 528L565 556M170 615L425 636M472 668L803 600M472 668L487 810M490 20L486 145L815 135M625 165L822 142L828 215L615 248M625 165L605 560M605 545L748 520M605 530L748 515M1138 210L1452 155M1100 235L1107 540M885 250L1062 220M1058 607L1450 657M1058 607L1045 813M1490 610L1478 813M1370 485L1548 470M1380 532L1545 528M1380 510V555M840 540L862 813M845 626L1020 640M0 380L95 370M0 660L85 650M85 810L230 800M122 530L120 655M232 0L230 125M1475 0L1500 305M1470 320V400M1500 70L1568 76M850 550L1025 545M635 190V235M650 180V238M660 172V238M672 172V235M685 168V232M698 170V230M20 670V740M40 660V720M60 670V730M0 280L100 300" />
        <path d={ticks(even([188, 192], [582, 227], 8), 5, 0, 6)} />
        <path d={ticks(even([472, 668], [803, 600], 8), 4, 0, -6)} />
        <path d={ticks(even([1138, 210], [1452, 155], 6), 4, 0, -10)} />
        <path d={ticks(even([885, 250], [1062, 220], 5), 4, 0, -5)} />
        <path d={ticks(even([1058, 607], [1450, 657], 8), 5, 0, 6)} />
        <path d={ticks(even([1370, 485], [1548, 470], 4), 5, 0, -5)} />
        <path d={ticks(even([790, 280], [812, 520], 8), 4, -9, 0)} strokeWidth={3} />
        <path d="M790 280L812 520" strokeWidth={4} />
      </g>
      <g fill="none" stroke="#0d3065" strokeWidth={4.2} opacity={0.46}>
        <path d="M0 128L30 165L55 190L100 212M30 168V195M616 350L650 378L680 398L740 418M672 395V410M1048 752H1110L1140 745L1165 728L1212 714L1230 740L1260 770L1300 795L1350 808M235 782L255 745L262 735M325 735L335 770L370 813M0 490L86 500M1500 200L1520 230L1560 240M1510 190V230" />
      </g>
      <g fill="none" stroke={BLUE} strokeWidth={3} opacity={0.44}>
        <path d="M500 20L560 45L640 70L720 72L730 90L745 75L760 95L780 70L800 60L812 130M560 40L620 55L700 50L750 65L800 95M885 60L950 70L1000 90L1040 115L1092 127M920 60L1000 75L1060 100L1090 125M860 350L918 345M862 376L920 368M995 448L1052 440M0 130L60 195L100 232M616 352L670 390L740 422M0 520L40 545L85 565M148 98H165V112H148ZM1500 262L1560 285M1045 805L1130 808L1210 800" />
        <path d="M1480 0V70L1495 30V70L1510 30V72L1530 30V74L1550 30V74" strokeWidth={1.4} />
      </g>
      <g fill="none" stroke={PLUM} strokeWidth={3} opacity={0.42}>
        <path d="M175 520L185 430L192 380H200L204 310H212L222 270L232 215L234 290L238 325L248 290L252 320L258 315L262 345H268L272 400H285L288 430H296L300 460H312L325 490H340L350 515L380 530L470 545L560 555M490 80L510 60L540 85L580 120L620 125L680 150L740 140M895 70L920 105L960 140L1000 160L1025 150M856 290L875 550M912 265L940 545M866 420L925 412M988 378L1050 370M988 365L1002 540M1050 355L1062 530L940 545M500 780L530 712L570 730L590 726L610 765L622 735L660 805M866 806L900 798L945 806M1305 85H1358M1332 68V103M1362 43H1410M1386 5V75M1422 85H1448M428 30V128" />
        <path d="M1130 468h14M1145 420L1200 408L1212 392L1265 372L1305 380L1330 362L1380 370L1400 355L1425 360" stroke={OLIVE} strokeDasharray="14 7" />
      </g>
      <path d="M505 785L535 725L590 738L610 775L625 755L650 813H490Z" fill={PLUM} opacity={0.18} />
      <g fill="none" stroke={TEAL} strokeWidth={3} opacity={0.48}>
        <path d="M180 518L195 500H210L215 485H225L230 465H245L248 430L260 460L265 425L275 435L280 385L295 390L298 355L310 350L318 375L322 370L328 345L335 340L340 370L352 355L360 375L362 400H368L372 440L385 470L405 480L415 510L450 530L500 545L565 555" />
        <path d="M175 590L190 565L195 590L200 600L205 575L210 570L218 605L228 565L235 560L242 600L255 575L262 570L270 598L282 570L290 565L300 600L308 580L315 575L330 600L338 565L345 560L360 600L372 570L380 625L388 570L395 560L402 600L410 605L418 575L425 580L440 600L448 570L455 560L475 590L490 570L500 590M172 530V615" />
        <path d="M510 680L535 675L560 692L590 688L610 725L620 705L650 735" opacity={0.5} />
      </g>
      <path d="M676 698H688V710H676Z" fill="#a03070" opacity={0.3} />
      <g opacity={0.36}>
        <Label x={232} y={250} s={34} fill={INK} serif>(d)</Label>
        <Label x={812} y={312} s={32} fill={INK} serif>(b)</Label>
        <Label x={1108} y={682} s={38} fill={INK} serif>(a)</Label>
        {["0.09", "0.08", "0.07", "0.06", "0.05", "0.04", "0.03", "0.02", "0.01"].map((n, i) => (
          <Label key={n} x={185 - i * 2} y={222 + i * 34} s={17} a="end" fill={INK}>{n}</Label>
        ))}
        {["0", "100", "150", "200", "250", "300"].map((n, i) => (
          <Label key={n} x={[1145, 1196, 1254, 1312, 1370, 1428][i]} y={[234, 226, 218, 208, 198, 189][i]} s={24} r={-7} a="middle" fill={INK}>{n}</Label>
        ))}
        {["10⁵", "10⁴", "10³", "10²", "10", "1", "10⁻¹", "10⁻²"].map((n, i) => (
          <Label key={n} x={782 + i * 3} y={298 + i * 32} s={18} a="end" fill={INK} serif>{n}</Label>
        ))}
        <Label x={365} y={248} s={15} r={2} fill={INK}>Signal (GeV)</Label>
        <Label x={388} y={268} s={13} r={3} fill={INK}>250 w/o pile-up □ with pile-up</Label>
        <Label x={388} y={288} s={13} r={3} fill={INK}>500 w/o pile-up □ with pile-up</Label>
        <Label x={692} y={674} s={13} r={-12} fill={INK}>w/o pile-up</Label>
        <Label x={694} y={704} s={13} r={-12} fill={INK}>with pile-up</Label>
        <Label x={226} y={638} s={17} fill={INK}>50</Label>
        <Label x={290} y={642} s={17} fill={INK}>100</Label>
        <Label x={368} y={660} s={24} fill={INK} serif>pT-q</Label>
        <Label x={82} y={752} s={12} r={-3} fill={INK}>Reconstructed mass</Label>
        <Label x={1315} y={672} s={13} r={6} fill={INK}>Data, L = 4.6 fb</Label>
        <Label x={1260} y={694} s={13} r={5} fill={INK}>ttH(125)</Label>
        <Label x={1340} y={706} s={13} r={5} fill={INK}>W+jets   tt+lf</Label>
        <Label x={1252} y={718} s={13} r={5} fill={INK}>tt+V</Label>
        <Label x={1335} y={730} s={13} r={5} fill={INK}>tt+cc   QCD</Label>
        <Label x={1250} y={742} s={13} r={5} fill={INK}>tt+bb</Label>
        <Label x={1330} y={756} s={13} r={5} fill={INK}>single t   all</Label>
        <Label x={0} y={284} s={12} r={4} fill={INK}>Reconstructed</Label>
        <Label x={150} y={72} s={14} r={6} fill={INK}>Backgr</Label>
        <Label x={160} y={50} s={14} r={6} fill={INK}>Data</Label>
      </g>
    </Zone>
  );
}

function HeroArt() {
  return (
    <svg viewBox="0 109 1400 862" className="absolute inset-0 h-full w-full" aria-hidden="true">
      <g className="opacity-70 blur-[0.6px]">
        <CollageTopLeft />
        <CollageMidLeft />
        <CollageTopMid />
        <CollageTopRight />
        <CollageRight />
        <CollageBottomLeft />
        <CollageBottomRight />
      </g>
      <SheetMassLvjj />
      <SheetDeltaR />
      <SheetDeltaPz />
      <SheetEntries />
      <SheetMassJj />
      <Formula />
    </svg>
  );
}

function GithubIcon() {
  return (
    <svg viewBox="0 0 1536 1792" className="h-6 w-[20.57px]" fill="currentColor">
      <path d="M768 128q209 0 385.500 103t279.500 279.500 103 385.500q0 251-146.500 451.500t-378.500 277.500q-27 5-40-7t-13-30q0-3 .5-76.500t.5-134.500q0-97-52-142 57-6 102.500-18t94-39 81-66.500 53-105 20.500-150.500q0-119-79-206 37-91-8-204-28-9-81 11t-92 44l-38 24q-93-26-192-26t-192 26q-16-11-42.500-27t-83.500-38.500-85-13.500q-45 113-8 204-79 87-79 206 0 85 20.500 150t52.500 105 80.500 67 94 39 102.500 18q-39 36-49 103-21 10-45 15t-57 5-65.500-21.500-55.500-62.500q-19-32-48.500-52t-49.500-24l-20-3q-21 0-29 4.500t-5 11.500 9 14 13 12l7 5q22 10 43.500 38t31.500 51l10 23q13 38 44 61.500t67 30 69.500 7 55.500-3.500l23-4q0 38 .5 88.500t.5 54.500q0 18-13 30t-40 7q-232-77-378.500-277.500t-146.500-451.500q0-209 103-385.500t279.500-279.500 385.500-103z" />
    </svg>
  );
}

function LinkedinIcon() {
  return (
    <svg viewBox="0 0 1536 1792" className="h-6 w-[20.57px]" fill="currentColor">
      <path d="M349 625v991h-330v-991h330zm21-306q1 73-50.500 122t-135.500 49h-2q-82 0-132-49t-50-122q0-74 51.500-122.500t134.500-48.500 133 48.500 51 122.500zm1166 729v568h-329v-530q0-105-40.500-164.500t-126.500-59.500q-63 0-105.500 34.500t-63.500 85.500q-11 30-11 81v553h-329q2-399 2-647t-1-296l-1-48h329v144h-2q20-32 41-56t56.500-52 87-43.500 114.500-15.500q171 0 275 113.500t104 332.500z" />
    </svg>
  );
}

function MailIcon() {
  return (
    <svg viewBox="0 0 1792 1792" className="size-6" fill="currentColor">
      <path d="M1792 710v794q0 66-47 113t-113 47h-1472q-66 0-113-47t-47-113v-794q44 49 101 87 362 246 497 345 57 42 92.500 65.500t94.500 48 110 24.500h2q51 0 110-24.500t94.500-48 92.500-65.500q170-123 498-345 57-39 100-87zm0-294q0 79-49 151t-122 123q-376 261-468 325-10 7-42.500 31t-54 39-52 33.500-57.500 27.500-50 9h-2q-23 0-50-9t-57.500-27.500-52-33.500-54-39-42.500-31q-91-64-262-182.500t-205-142.500q-62-42-117-115.500t-55-136.500q0-78 41.500-130t118.500-52h1472q65 0 112.500 47t47.500 113z" />
    </svg>
  );
}

const SKILLS = ["MACHINE LEARNING", "ALGORITHM DEVELOPMENT AND CODING", "MATHEMATICS", "DATA CLEANING", "FEATURE SELECTION", "OPTIMZATION"];

export default function App() {
  return (
    <div className="flex h-[971px] w-full flex-col overflow-hidden bg-[#588ac5] font-[Roboto,sans-serif]">
      <div className="flex h-[42px] shrink-0 justify-end gap-[6.400px] bg-[#555] pt-[8.500px] pr-[95px] text-[#999]">
        <GithubIcon />
        <LinkedinIcon />
        <MailIcon />
      </div>
      <header className="flex h-[67px] shrink-0 items-center justify-between bg-white pt-[7px] pr-[116px] pl-[160px] text-[#555]">
        <a className="text-[30px] leading-none tracking-[0.06px]">C EDWARDS</a>
        <nav className="flex gap-[30px] text-sm leading-none font-bold tracking-[1.120px] underline">
          <a>HOME</a>
          <a>ABOUT</a>
          <a>PROJECTS</a>
        </nav>
      </header>
      <main className="relative flex-1">
        <HeroArt />
        <section className="relative w-[618px] pt-[132px] text-right font-bold text-white">
          <h1 className="text-[46px] leading-[51px] tracking-[3.600px]">
            FEASIBILITY OF
            <br />
            RECONSTRUCTING
            <br />
            THE HIGGS BOSON
          </h1>
          <ul className="mt-[47.500px] text-[18px] leading-[45.700px] tracking-[1.800px]">
            {SKILLS.map((skill) => (
              <li key={skill}>{skill}</li>
            ))}
          </ul>
        </section>
      </main>
    </div>
  );
}
